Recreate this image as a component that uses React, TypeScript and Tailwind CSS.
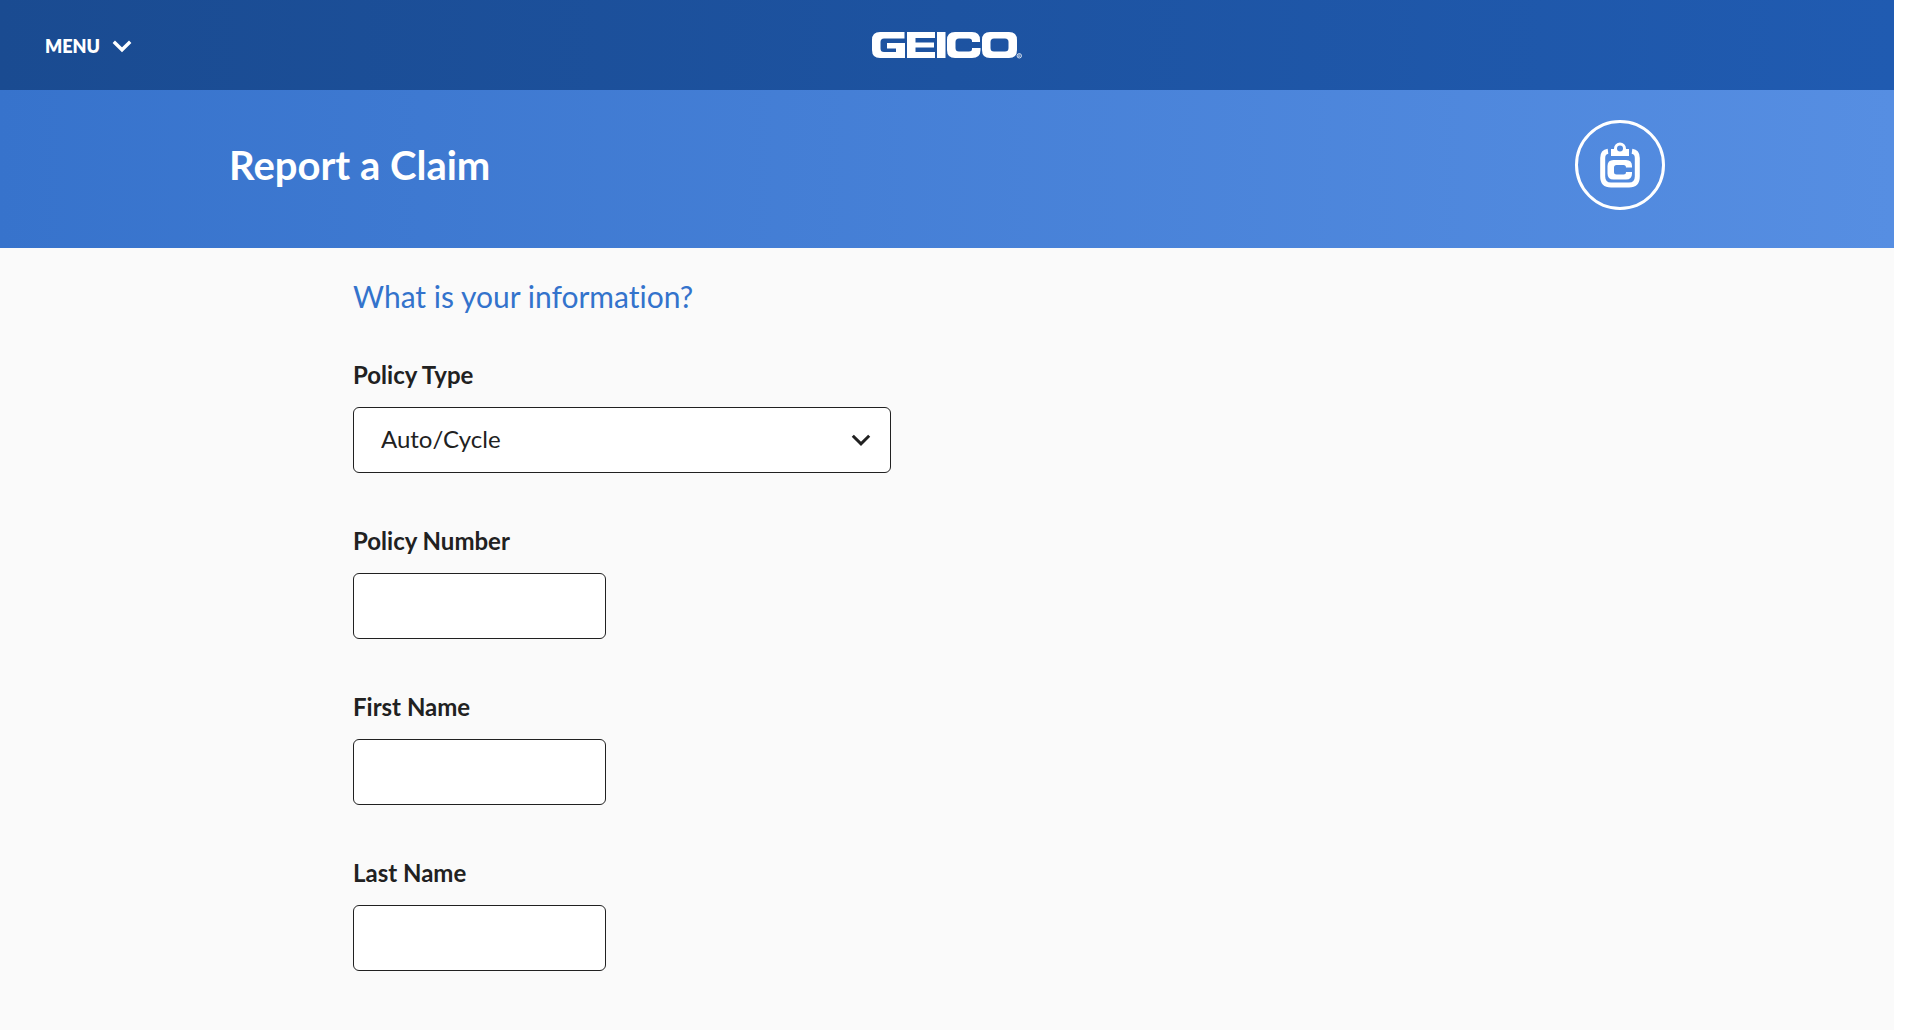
import React from "react";

function Chevron({ className }: { className: string }) {
  return (
    <svg viewBox="0 0 20 14" fill="none" stroke="currentColor" aria-hidden="true" className={className}>
      <path d="M1.8 2.8 L10 10.8 L18.2 2.8" />
    </svg>
  );
}

function GeicoLogo() {
  return (
    <svg viewBox="0 0 150 28" role="img" aria-label="GEICO" className="h-7 w-[150px] fill-white">
      <path d="M8 0 H32.5 V6.5 H12 Q8.5 6.5 8.5 10 V16.5 Q8.5 20 12 20 H24 V16.5 H15 V11 H33 V26 H8 Q0 26 0 18 V8 Q0 0 8 0 Z" />
      <path d="M35 0 H63 V6 H43.5 V10.5 H62 V15.5 H43.5 V20 H63 V26 H35 Z" />
      <path d="M65 0 H73.5 V26 H65 Z" />
      <path d="M83 0 H100 Q108 0 108 8 V10 H100 V9 Q100 6.5 97 6.5 H87 Q83.5 6.5 83.5 10 V16 Q83.5 19.5 87 19.5 H97 Q100 19.5 100 17 V16 H108.5 V18 Q108.5 26 100 26 H83 Q75 26 75 18 V8 Q75 0 83 0 Z" />
      <path fillRule="evenodd" d="M118 0 H137 Q145 0 145 8 V18 Q145 26 137 26 H118 Q110 26 110 18 V8 Q110 0 118 0 Z M122 6.5 Q118.5 6.5 118.5 10 V16 Q118.5 19.5 122 19.5 H133 Q136.5 19.5 136.5 16 V10 Q136.5 6.5 133 6.5 Z" />
      <circle cx="147.3" cy="23.8" r="2.2" fill="none" stroke="white" strokeWidth="0.8" />
      <path d="M146.7 25.2 V22.7 H147.6 Q148.4 23.4 147.6 24.1 H146.8 M147.5 24.1 L148.2 25.2" fill="none" stroke="white" strokeWidth="0.5" />
    </svg>
  );
}

function ClaimIcon() {
  return (
    <svg viewBox="0 0 90 90" aria-hidden="true" className="size-[90px]">
      <circle cx="45" cy="45" r="43.5" fill="none" stroke="white" strokeWidth="3" />
      <path d="M33 31.3 Q27.7 32 27.7 38 V56.5 Q27.7 65 36 65 H54 Q62.3 65 62.3 56.5 V38 Q62.3 32 57 31.3" fill="none" stroke="white" strokeWidth="5" />
      <path fillRule="evenodd" fill="white" d="M36 29 H39 V28.5 A6 6 0 0 1 51 28.5 V29 H54 V36 H36 Z M45 25.5 A3 3 0 1 0 45 31.5 A3 3 0 1 0 45 25.5 Z" />
      <path fill="white" d="M38.5 40 H51 Q57 40 57 46 V47.5 H51 Q51 45 48.5 45 H41.5 Q39 45 39 47.5 V52 Q39 54.5 41.5 54.5 H48.5 Q51 54.5 51 52 H57 V53.5 Q57 59.5 51 59.5 H38.5 Q32.5 59.5 32.5 53.5 V46 Q32.5 40 38.5 40 Z" />
    </svg>
  );
}

function TextField({ id, label }: { id: string; label: string }) {
  return (
    <div className="flex flex-col items-start gap-4">
      <label htmlFor={id} className="text-2xl/8 font-bold">{label}</label>
      <input id={id} type="text" className="h-[66px] w-[253px] rounded-md border border-[#212121] bg-white px-[27px] text-2xl" />
    </div>
  );
}

export default function App() {
  return (
    <div className="min-h-screen bg-white pr-[26px] font-['Lato',sans-serif] text-[#212121] [font-variant-ligatures:none]">
      <div className="min-h-screen bg-[#fafafa]">
        <header className="grid h-[90px] grid-cols-[1fr_auto_1fr] items-center bg-linear-to-r from-[#1a4b91] to-[#205bb1] px-[45px] pt-[2px] text-white">
          <button type="button" className="flex items-center gap-3 justify-self-start text-lg font-extrabold">
            MENU
            <Chevron className="h-[14px] w-5 stroke-[3.4]" />
          </button>
          <a href="#home" aria-label="GEICO home">
            <GeicoLogo />
          </a>
        </header>
        <section className="bg-linear-to-r from-[#3773cc] to-[#568ee2] pt-[30px] pb-[38px]">
          <div className="mx-auto flex max-w-[1436px] items-center justify-between">
            <h1 className="text-[40px]/12 font-bold text-white">Report a Claim</h1>
            <ClaimIcon />
          </div>
        </section>
        <main className="mx-auto max-w-[1188px] pt-7">
          <h2 className="text-[30px]/10 text-[#3373cc]">What is your information?</h2>
          <form className="mt-[43px] flex flex-col gap-[52px]">
            <div className="flex flex-col items-start gap-4">
              <label htmlFor="policy-type" className="text-2xl/8 font-bold">Policy Type</label>
              <div className="relative w-[538px] max-w-full">
                <select id="policy-type" className="h-[66px] w-full appearance-none rounded-md border border-[#212121] bg-white px-[27px] pb-[2px] text-2xl">
                  <option>Auto/Cycle</option>
                </select>
                <Chevron className="pointer-events-none absolute top-[26px] right-5 h-[14px] w-5 stroke-[3]" />
              </div>
            </div>
            <TextField id="policy-number" label="Policy Number" />
            <TextField id="first-name" label="First Name" />
            <TextField id="last-name" label="Last Name" />
          </form>
        </main>
      </div>
    </div>
  );
}
